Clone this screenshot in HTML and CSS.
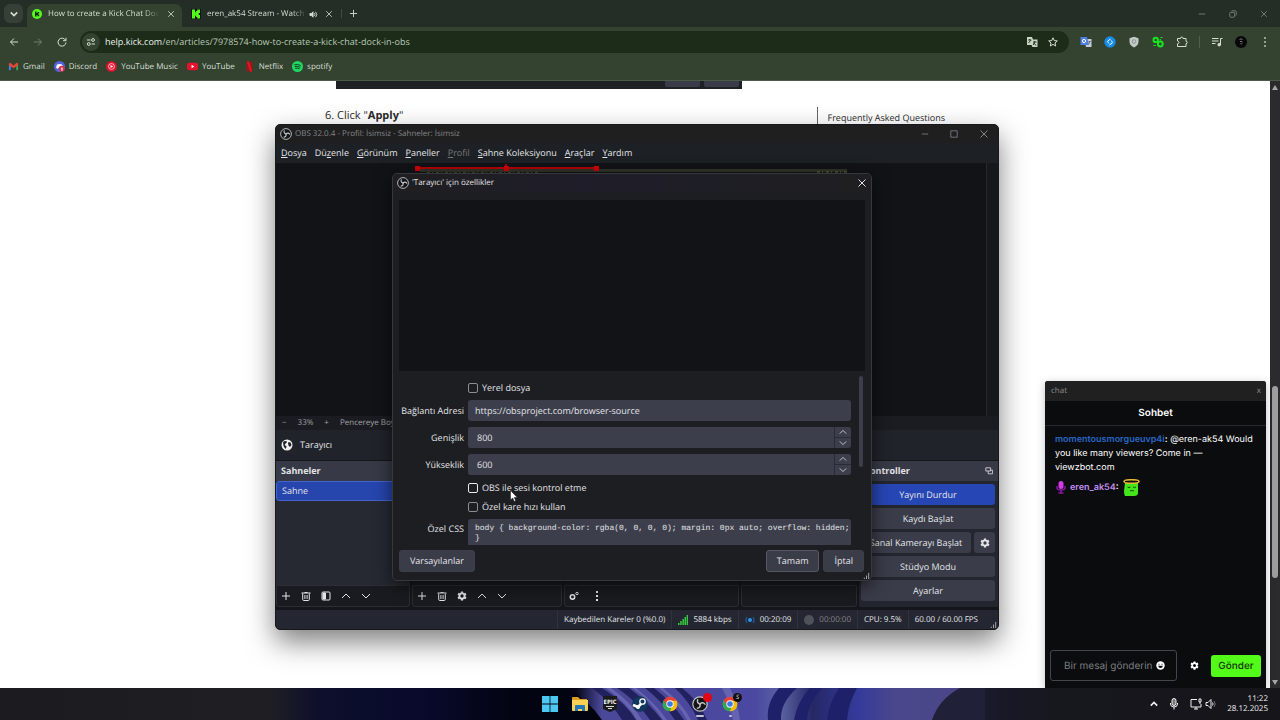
FILE: index.html
```html
<!DOCTYPE html>
<html lang="tr">

<head>
    <meta charset="UTF-8">
    <meta name="viewport" content="width=device-width, initial-scale=1.0">
    <title>How to create a Kick Chat Dock in OBS</title>
    <link rel="stylesheet" href="styles.css">
</head>

<body>
    <!-- shared icons -->
    <svg class="defs" aria-hidden="true">
        <symbol id="i-close" viewBox="0 0 10 10"><path d="M1.5 1.5l7 7M8.5 1.5l-7 7" /></symbol>
        <symbol id="i-plus" viewBox="0 0 10 10"><path d="M5 1v8M1 5h8" /></symbol>
        <symbol id="i-up" viewBox="0 0 10 10"><path d="M1 7l4-4 4 4" /></symbol>
        <symbol id="i-down" viewBox="0 0 10 10"><path d="M1 3l4 4 4-4" /></symbol>
        <symbol id="i-trash" viewBox="0 0 10 10"><path d="M0.5 2h9M3.5 1.5h3M1.7 2.3v6q0 1.2 1 1.2h4.600q1 0 1-1.200v-6M3.900 4v4M6.100 4v4" /></symbol>
        <symbol id="i-gear" viewBox="0 0 24 24"><path fill="currentColor" stroke="none" fill-rule="evenodd" d="M9.500 1h5l.7 3.200 1.900 1.100 3.100-1 2.500 4.400-2.400 2.200v2.200l2.400 2.200-2.500 4.400-3.100-1-1.900 1.100-.7 3.200h-5l-.7-3.200-1.900-1.100-3.100 1-2.500-4.400 2.400-2.200v-2.200L1.300 8.700l2.500-4.400 3.100 1 1.900-1.100zM12 8a4 4 0 100 8 4 4 0 000-8z" /></symbol>
        <symbol id="i-obs" viewBox="0 0 24 24">
            <circle cx="12" cy="12" r="10.800" fill="#141519" stroke="#c4c4c6" stroke-width="1.800" />
            <g fill="none" stroke="#c4c4c6" stroke-width="2.200" stroke-linecap="round">
                <path d="M12 12C8.500 11 7.500 8.500 8.500 5.500" />
                <path d="M12 12c2.600-2.500 5.300-2.200 7.400.2" />
                <path d="M12 12c.9 3.500-.7 5.700-3.800 6.300" />
            </g>
        </symbol>
        <symbol id="i-grip" viewBox="0 0 8 8"><path d="M1.500 8V6.500M4 8V4M6.500 8V1" /></symbol>
        <symbol id="i-chrome" viewBox="0 0 24 24">
            <g stroke="none">
                <path fill="#ea4335" d="M12 12L2.500 6.500a11 11 0 0119 0z" />
                <path fill="#fbbc04" d="M12 12l9.500-5.500A11 11 0 0112 23z" />
                <path fill="#34a853" d="M12 12v11A11 11 0 012.500 6.500z" />
                <path fill="#ea4335" d="M2.500 6.500L7 14.500l5-7.500h9.800L20 4z" />
                <path fill="#34a853" d="M2.500 6.500l5 8.500 6.500 2.500L12 23A11 11 0 012.500 6.500z" />
                <path fill="#fbbc04" d="M21.500 7H12l5 7.500L12 23A11 11 0 0021.500 7z" />
                <circle cx="12" cy="12" r="5.500" fill="#fff" />
                <circle cx="12" cy="12" r="4.200" fill="#3b7bea" />
            </g>
        </symbol>
    </svg>

    <header class="browser">
        <div class="tabstrip">
            <button class="tab-search" aria-label="Search tabs"><svg class="ico s8 bold"><use href="#i-down" /></svg></button>
            <div class="tab active">
                <svg class="fav" viewBox="0 0 10 10"><circle cx="5" cy="5" r="5" fill="#53fc18" /><path fill="#16231a" d="M3 2.500h1.500V4h1V3h1.700v1.500h-1v1h1V7.200H5.500V6h-1v1.500H3z" /></svg>
                <span class="tab-title">How to create a Kick Chat Dock</span>
                <button class="tab-close" aria-label="Close tab"><svg class="ico s8"><use href="#i-close" /></svg></button>
            </div>
            <div class="tab">
                <svg class="fav" viewBox="0 0 10 10"><path fill="#0c120c" d="M0 0h10v10H0z" /><path fill="#53fc18" d="M1 .5h3v2.700h1V2h1.200V.5H9V4H7.800v2H9v3.500H6.200V8H5V6.800H4v2.700H1z" /></svg>
                <span class="tab-title">eren_ak54 Stream - Watch L</span>
                <svg class="ico s9" viewBox="0 0 10 10"><path fill="currentColor" d="M1 4h1.500l2-2v6l-2-2H1z" /><path d="M6 3.500q1.300 1.500 0 3M7.300 2q2.600 3 0 6" /></svg>
                <button class="tab-close" aria-label="Close tab"><svg class="ico s8"><use href="#i-close" /></svg></button>
            </div>
            <button class="new-tab" aria-label="New tab"><svg class="ico s9"><use href="#i-plus" /></svg></button>
            <div class="win-controls">
                <button aria-label="Minimize"><svg class="ico s8" viewBox="0 0 10 10"><path d="M1 5h8" /></svg></button>
                <button aria-label="Restore"><svg class="ico s8" viewBox="0 0 10 10"><rect x="1" y="3" width="6" height="6" rx="1" /><path d="M3 1.500q0-.5 1-.5h3.500Q9 1 9 2.500V6q0 1-.7 1" /></svg></button>
                <button aria-label="Close"><svg class="ico s8"><use href="#i-close" /></svg></button>
            </div>
        </div>

        <div class="toolbar">
            <nav class="nav-buttons">
                <button aria-label="Back"><svg class="ico s10" viewBox="0 0 10 10"><path d="M9 5H1.500M5 1.500L1.500 5 5 8.500" /></svg></button>
                <button aria-label="Forward" disabled><svg class="ico s10" viewBox="0 0 10 10"><path d="M1 5h7.500M5 1.500L8.500 5 5 8.500" /></svg></button>
                <button aria-label="Reload"><svg class="ico s10" viewBox="0 0 10 10"><path d="M8.500 3.200A4 4 0 109 5.500M9 .8v2.900H6" /></svg></button>
            </nav>
            <div class="omnibox">
                <button class="site-info" aria-label="Site information"><svg class="ico s10" viewBox="0 0 10 10"><path d="M1 3h3.500M5.500 7H9" /><circle cx="7" cy="3" r="1.400" /><circle cx="2.800" cy="7" r="1.400" /></svg></button>
                <span class="url"><b>help.kick.com</b>/en/articles/7978574-how-to-create-a-kick-chat-dock-in-obs</span>
                <button aria-label="Translate"><svg class="ico s12" viewBox="0 0 12 12"><path fill="#c9d3c6" stroke="none" d="M1 1h5l1 2.500h4.500V11H6.500L5.500 9H1z" /><path stroke="#24361f" d="M2.300 4h3M3.800 3v1M2.500 7l2.500-3M7 6h3.500M8.700 5v1l-1.500 3M8 7l2 2.500" /></svg></button>
                <button aria-label="Bookmark"><svg class="ico s10" viewBox="0 0 10 10"><path d="M5 .8l1.300 2.800 3 .3L7 6l.7 3L5 7.400 2.300 9 3 6 .7 3.900l3-.3z" /></svg></button>
            </div>
            <div class="extensions">
                <button aria-label="Google Translate"><svg class="ico s12" viewBox="0 0 12 12"><path fill="#c6cdd6" stroke="none" d="M4 3h7.500v8H6z" /><path fill="#4c80dc" stroke="none" d="M.5 1H7l2 8H.5z" /><circle cx="4" cy="5" r="1.600" stroke="#fff" /><path stroke="#68727c" d="M8.500 5.500h2.300M9.600 5.500L9 8" /></svg></button>
                <button aria-label="Shazam"><svg class="ico s12" viewBox="0 0 12 12"><circle cx="6" cy="6" r="5.700" fill="#168be5" stroke="none" /><path stroke="#fff" d="M6.500 3L4 4.800q-1 1 .2 1.900l1 .8M5.500 9L8 7.200q1-1-.2-1.900l-1-.8" /></svg></button>
                <button aria-label="Shield"><svg class="ico s12" viewBox="0 0 12 12"><path fill="#c3c9c7" stroke="none" d="M6 .8l4.500 1.500v3.500q0 3.700-4.500 5.700-4.500-2-4.500-5.700V2.300z" /><circle cx="6" cy="5.500" r="1.800" stroke="#8c9691" /></svg></button>
                <button aria-label="Extension"><svg class="ico s12 green" viewBox="0 0 12 12"><circle cx="3.700" cy="3.900" r="2.200" /><circle cx="8.300" cy="8" r="2.400" /><path stroke-width="1.200" d="M8.500 1.500h2M1.500 9.500H4M7.800 3.200l1 1.200" /></svg></button>
                <button aria-label="Extensions"><svg class="ico s12" viewBox="0 0 12 12"><path d="M1.500 2.500h3q0-1.500 1.300-1.500T7 2.500h3v2.800q1.200 0 1.200 1.200T10 7.700v2.800H1.500V7.800q1.500-.2 1.500-1.400T1.500 5z" /></svg></button>
                <i class="divider"></i>
                <button aria-label="Media control"><svg class="ico s12" viewBox="0 0 12 12"><path d="M1 2.500h6.500M1 5h6.500M1 7.500h3.500M9.500 8.500v-6h2" /><circle cx="8.200" cy="8.700" r="1.300" fill="currentColor" /></svg></button>
                <button aria-label="Profile"><svg class="ico s12" viewBox="0 0 12 12"><circle cx="6" cy="6" r="6" fill="#070807" stroke="none" /><path stroke="#999" stroke-width=".8" d="M4.500 3.500q1.500-1.200 3 0M5 5.500h2.300M5.500 7.500q1 1 2-.5" /></svg></button>
                <button aria-label="Menu"><svg class="ico s12" viewBox="0 0 12 12"><path fill="currentColor" stroke="none" d="M5.200 1.200h1.600v1.600H5.200zM5.200 5.200h1.600v1.600H5.200zM5.200 9.200h1.600v1.600H5.200z" /></svg></button>
            </div>
        </div>

        <nav class="bookmarks">
            <a href="#"><svg viewBox="0 0 12 12"><path fill="#4285f4" d="M1 3h2v7H1z" /><path fill="#34a853" d="M9 3h2v7H9z" /><path fill="#ea4335" d="M1 2.500l1.500-.5L6 5l3.500-3 1.500.5v2L6 8 1 4.500z" /></svg>Gmail</a>
            <a href="#"><svg viewBox="0 0 12 12"><circle cx="6" cy="6" r="6" fill="#5661dc" /><path fill="#fff" d="M3 4q3-1.500 6 0l.7 3.500-2 1L7 7.700H5l-.7.800-2-1z" /><circle cx="8.500" cy="8.500" r="3.300" fill="#d9304c" /><path fill="#fff" d="M8 7h1.300v3.500H8z" /></svg>Discord</a>
            <a href="#"><svg viewBox="0 0 12 12"><circle cx="6" cy="6" r="5.800" fill="#e8112d" /><circle cx="6" cy="6" r="3.200" fill="none" stroke="#fff" stroke-width=".7" /><path fill="#fff" d="M5 4.300L8 6 5 7.700z" /></svg>YouTube Music</a>
            <a href="#"><svg viewBox="0 0 12 12"><rect y="2" width="12" height="8" rx="2" fill="#e8112d" /><path fill="#fff" d="M5 4.200L8 6 5 7.800z" /></svg>YouTube</a>
            <a href="#"><svg viewBox="0 0 12 12"><path fill="#a90f18" d="M3 .5h2.500v11H3zM6.500 .5H9v11H6.500z" /><path fill="#df1722" d="M3 .5h2.500l3.500 11H6.500z" /></svg>Netflix</a>
            <a href="#"><svg viewBox="0 0 12 12"><circle cx="6" cy="6" r="6" fill="#1ed760" /><path fill="none" stroke="#15351f" d="M2.500 4.200q3.500-1 7 .7M3 6.200q3-.8 6 .6M3.500 8q2.500-.6 4.700.5" /></svg>spotify</a>
        </nav>
    </header>

    <main class="page">
        <article class="article">
            <div class="article-main">
                <div class="shot"><span></span><span></span></div>
                <p>6. Click "<b>Apply</b>"</p>
            </div>
            <aside><a href="#">Frequently Asked Questions</a></aside>
        </article>
        <div class="scrollbar"><i class="arrow-up"></i><i class="thumb"></i><i class="arrow-down"></i></div>
    </main>

    <!-- OBS main window -->
    <section class="window obs">
        <div class="titlebar dim">
            <svg class="logo"><use href="#i-obs" /></svg>
            <span>OBS 32.0.4 - Profil: İsimsiz - Sahneler: İsimsiz</span>
            <div class="title-buttons">
                <button aria-label="Simge durumuna küçült"><svg class="ico s8" viewBox="0 0 10 10"><path d="M1 5h8" /></svg></button>
                <button aria-label="Ekranı kapla"><svg class="ico s8" viewBox="0 0 10 10"><path d="M1 1h8v8H1z" /></svg></button>
                <button aria-label="Kapat"><svg class="ico s10"><use href="#i-close" /></svg></button>
            </div>
        </div>
        <nav class="menubar">
            <button><u>D</u>osya</button>
            <button>Dü<u>z</u>enle</button>
            <button><u>G</u>örünüm</button>
            <button><u>P</u>aneller</button>
            <button disabled><u>P</u>rofil</button>
            <button><u>S</u>ahne Koleksiyonu</button>
            <button><u>A</u>raçlar</button>
            <button><u>Y</u>ardım</button>
        </nav>
        <div class="preview">
            <svg class="selection" viewBox="0 0 440 12">
                <path fill="#303527" d="M5 6h427v3H5z" />
                <path stroke="#66703c" stroke-dasharray="3 2 1 3" d="M12 10h112M402 9h30" />
                <path stroke="#b30009" stroke-width="2" d="M2 5h180M91 1v4" />
                <path fill="#d0000c" d="M0 3h5v5H0zM89 3h5v5H89zM179 3h5v5H179z" />
            </svg>
            <i class="preview-edge"></i>
        </div>
        <div class="zoombar">
            <button aria-label="Uzaklaştır">−</button><span>33%</span><button aria-label="Yakınlaştır">+</button>
            <span class="fit">Pencereye Boyutlandır</span>
        </div>
        <div class="source-bar">
            <svg viewBox="0 0 12 12"><circle cx="6" cy="6" r="5.500" fill="#f2f2f2" /><path fill="#20232a" d="M2 3q2-1.500 4-.5L5.500 4 4 5v1.500l1.500.5v1L4.500 10Q3 8 2.500 7zM7.500 3l2 .5 1 2.500-1.500 2L7.500 6.500 7 4.500z" /></svg>
            <span>Tarayıcı</span>
        </div>
        <div class="docks">
            <section class="dock scenes">
                <h2>Sahneler</h2>
                <div class="dock-body"><button class="scene">Sahne</button></div>
                <div class="dock-tools">
                    <button aria-label="Ekle"><svg class="ico s10"><use href="#i-plus" /></svg></button>
                    <button aria-label="Sil"><svg class="ico s10"><use href="#i-trash" /></svg></button>
                    <button aria-label="Filtreler"><svg class="ico s10" viewBox="0 0 10 10"><rect x="1" y="1" width="8" height="8" rx="1" /><path fill="currentColor" d="M2 2h2.500v6H2z" /></svg></button>
                    <button aria-label="Yukarı"><svg class="ico s10"><use href="#i-up" /></svg></button>
                    <button aria-label="Aşağı"><svg class="ico s10"><use href="#i-down" /></svg></button>
                </div>
            </section>
            <section class="dock sources" aria-label="Kaynaklar">
                <div class="dock-body"></div>
                <div class="dock-tools">
                    <button aria-label="Ekle"><svg class="ico s10"><use href="#i-plus" /></svg></button>
                    <button aria-label="Sil"><svg class="ico s10"><use href="#i-trash" /></svg></button>
                    <button aria-label="Özellikler"><svg class="ico s10"><use href="#i-gear" /></svg></button>
                    <button aria-label="Yukarı"><svg class="ico s10"><use href="#i-up" /></svg></button>
                    <button aria-label="Aşağı"><svg class="ico s10"><use href="#i-down" /></svg></button>
                </div>
            </section>
            <section class="dock mixer" aria-label="Ses Karıştırıcısı">
                <div class="dock-body"></div>
                <div class="dock-tools">
                    <button aria-label="Gelişmiş ses"><svg class="ico s10" viewBox="0 0 10 10"><circle cx="3.500" cy="6" r="2.200" stroke-width="1.500" /><circle cx="8" cy="2.500" r="1.200" /></svg></button>
                    <button aria-label="Menü"><svg class="ico s10" viewBox="0 0 10 10"><path fill="currentColor" stroke="none" d="M4 0h2v2H4zM4 4h2v2H4zM4 8h2v2H4z" /></svg></button>
                </div>
            </section>
            <section class="dock transitions" aria-label="Sahne Geçişleri">
                <div class="dock-body"></div>
                <div class="dock-tools"></div>
            </section>
            <section class="dock controls">
                <h2>Kontroller <svg class="ico s8" viewBox="0 0 10 10"><path d="M1 1h6v4H1zM4 5v3.500h5.500V4H7" /></svg></h2>
                <div class="control-list">
                    <button class="primary">Yayını Durdur</button>
                    <button>Kaydı Başlat</button>
                    <div class="control-pair">
                        <button>Sanal Kamerayı Başlat</button>
                        <button aria-label="Sanal kamera ayarları"><svg class="ico s10"><use href="#i-gear" /></svg></button>
                    </div>
                    <button>Stüdyo Modu</button>
                    <button>Ayarlar</button>
                </div>
            </section>
        </div>
        <footer class="statusbar">
            <span>Kaybedilen Kareler 0 (%0.0)</span>
            <span><svg viewBox="0 0 10 10"><path fill="#37c840" d="M0 8h1.500v2H0zM2.200 6h1.500v4H2.200zM4.400 4h1.500v6H4.400zM6.500 2h1.500v8H6.500zM8.600 0H10v10H8.600z" /></svg>5884 kbps</span>
            <span><svg viewBox="0 0 10 10"><circle cx="5" cy="5" r="2" fill="#2c95ee" /><path fill="none" stroke="#215b96" stroke-width="1.300" d="M2 2q-2 3 0 6M8 2q2 3 0 6" /></svg>00:20:09</span>
            <span class="off"><svg viewBox="0 0 10 10"><circle cx="5" cy="5" r="5" fill="#50525a" /></svg>00:00:00</span>
            <span>CPU: 9.5%</span>
            <span>60.00 / 60.00 FPS</span>
            <svg class="grip"><use href="#i-grip" /></svg>
        </footer>
    </section>

    <!-- source properties dialog -->
    <form class="window dialog">
        <div class="titlebar">
            <svg class="logo"><use href="#i-obs" /></svg>
            <span>'Tarayıcı' için özellikler</span>
            <div class="title-buttons"><button type="button" aria-label="Kapat"><svg class="ico s10"><use href="#i-close" /></svg></button></div>
        </div>
        <div class="dialog-preview"></div>
        <div class="dialog-scroll">
            <div class="fields">
                <label class="check"><input type="checkbox">Yerel dosya</label>
                <label for="url">Bağlantı Adresi</label>
                <input class="field" id="url" type="text" value="https://obsproject.com/browser-source">
                <label for="width">Genişlik</label>
                <div class="spin">
                    <input class="field" id="width" type="text" value="800">
                    <button type="button" aria-label="Artır"><svg class="ico s8"><use href="#i-up" /></svg></button>
                    <button type="button" aria-label="Azalt"><svg class="ico s8"><use href="#i-down" /></svg></button>
                </div>
                <label for="height">Yükseklik</label>
                <div class="spin">
                    <input class="field" id="height" type="text" value="600">
                    <button type="button" aria-label="Artır"><svg class="ico s8"><use href="#i-up" /></svg></button>
                    <button type="button" aria-label="Azalt"><svg class="ico s8"><use href="#i-down" /></svg></button>
                </div>
                <label class="check hover"><input type="checkbox">OBS ile sesi kontrol etme</label>
                <label class="check"><input type="checkbox">Özel kare hızı kullan</label>
                <label for="css">Özel CSS</label>
                <textarea class="field" id="css" spellcheck="false">body { background-color: rgba(0, 0, 0, 0); margin: 0px auto; overflow: hidden; }</textarea>
            </div>
            <i class="dialog-thumb"></i>
        </div>
        <div class="dialog-buttons">
            <button type="button">Varsayılanlar</button>
            <button type="button" class="default">Tamam</button>
            <button type="button">İptal</button>
        </div>
        <svg class="grip"><use href="#i-grip" /></svg>
    </form>

    <!-- chat dock -->
    <section class="chat">
        <div class="chat-title"><span>chat</span><button aria-label="Kapat">x</button></div>
        <h2>Sohbet</h2>
        <div class="messages">
            <p><b class="user-blue">momentousmorgueuvp4i</b><b>:</b> @eren-ak54 Would you like many viewers? Come in — viewzbot.com</p>
            <p class="host">
                <svg class="mic" viewBox="0 0 10 13"><rect x="2.500" width="5" height="8" rx="2.500" fill="#d63ae8" /><path fill="none" stroke="#8a16a8" stroke-width="1.500" d="M1 5v2q0 2 4 2t4-2V5M5 9v3M2.500 12h5" /></svg>
                <b><span class="user-purple">eren_ak54</span>:</b>
                <svg class="emote" viewBox="0 0 17 17"><path fill="#45e51b" d="M2 4h13v10q0 3-4 3H2q-1-2-1-5z" /><ellipse cx="8.500" cy="2.500" rx="7.500" ry="1.800" fill="none" stroke="#e8b734" stroke-width="1.500" /><path fill="none" stroke="#144b0b" d="M4.500 8q1.500 1.200 3 0M10 8q1.500 1.200 3 0M7 12q2-1 4 0" /></svg>
            </p>
        </div>
        <div class="composer">
            <div class="message-box">
                <input type="text" placeholder="Bir mesaj gönderin" aria-label="Bir mesaj gönderin">
                <button aria-label="İfadeler"><svg viewBox="0 0 10 10"><circle cx="5" cy="5" r="4.700" fill="#fff" /><path fill="#0b0c0d" d="M2.800 3h1v1.300h-1zM6.200 3h1v1.300h-1zM2.300 5.300h5.400q-.5 2.500-2.700 2.500T2.300 5.300z" /></svg></button>
            </div>
            <button aria-label="Ayarlar"><svg class="ico s9"><use href="#i-gear" /></svg></button>
            <button class="send">Gönder</button>
        </div>
    </section>

    <footer class="taskbar">
        <svg class="wallpaper" viewBox="0 0 1280 32" preserveAspectRatio="none">
            <defs>
                <linearGradient id="base">
                    <stop offset="0" stop-color="#1c1c20" />
                    <stop offset=".21" stop-color="#1f1f23" />
                    <stop offset=".25" stop-color="#0d0f2c" />
                    <stop offset=".33" stop-color="#090a2c" />
                    <stop offset=".4" stop-color="#030413" />
                    <stop offset=".45" stop-color="#050516" />
                    <stop offset=".47" stop-color="#4a4898" />
                    <stop offset=".59" stop-color="#4b48a2" />
                    <stop offset=".61" stop-color="#5c62a0" />
                    <stop offset=".635" stop-color="#252765" />
                    <stop offset=".67" stop-color="#353a9a" />
                    <stop offset=".7" stop-color="#4a478c" />
                    <stop offset=".75" stop-color="#4a4688" />
                    <stop offset=".765" stop-color="#191a2c" />
                    <stop offset=".82" stop-color="#17171e" />
                    <stop offset="1" stop-color="#15151a" />
                </linearGradient>
            </defs>
            <path fill="url(#base)" d="M0 0h1280v32H0z" />
            <path fill="#030412" d="M520 0h48q22 14 34 32H520z" />
            <path fill="#20215d" d="M592 0h10q24 15 34 32h-14q-10-17-30-32zM617 0h12q20 15 33 32h-12q-12-18-33-32zM645 0h9q18 14 30 32h-9q-12-18-30-32zM675 0h7q18 14 25 32h-9q-8-18-23-32z" />
            <path fill="#8080bf" opacity=".5" d="M606 0h5q22 16 31 32h-5q-10-17-31-32zM632 0h4q20 16 31 32h-4q-11-18-31-32zM659 0h4q20 16 28 32h-4q-8-16-28-32zM722 0h8q8 16 10 32h-7q-3-18-11-32z" />
            <path fill="#1e206a" d="M779 0h18q-17 15-16 32h-13q-2-17 11-32zM810 0h12q-14 15-15 32h-13q3-18 16-32zM839 0h18q-9 16-10 32h-20q2-18 12-32z" />
            <path fill="#202038" d="M960 0h25v32h-53q7-21 28-32z" />
        </svg>
        <nav class="apps">
            <button aria-label="Başlat"><svg viewBox="0 0 16 16"><path fill="#4cc8f2" d="M0 0h7.600v7.600H0zM8.400 0H16v7.600H8.400zM0 8.400h7.600V16H0zM8.400 8.400H16V16H8.400z" /></svg></button>
            <button aria-label="Dosya Gezgini"><svg viewBox="0 0 16 16"><path fill="#d99b24" d="M0 2q0-1 1-1h5l2 2h7v4H0z" /><path fill="#fad155" d="M0 4h16v10q0 1-1 1H1q-1 0-1-1z" /><path fill="#2277ba" d="M3 10q0-1 1-1h8q1 0 1 1v5h-3v-2H6v2H3z" /></svg></button>
            <button aria-label="Epic Games"><svg viewBox="0 0 16 16"><path fill="#1b1b1d" d="M1 0h14v13l-7 3-7-3z" /><text x="8" y="8">EPIC</text><path stroke="#ddd" d="M4 10.500h8M6 12.500h4" /></svg></button>
            <button aria-label="Steam"><svg viewBox="0 0 16 16"><circle cx="8" cy="8" r="7.800" fill="#12375d" /><path stroke="#fff" stroke-width="2.500" d="M1 9l5 2 4-4" /><circle cx="10.500" cy="5.500" r="2.700" fill="#12375d" stroke="#fff" stroke-width="1.300" /><circle cx="6" cy="11" r="2" fill="#fff" /></svg></button>
            <button aria-label="Chrome"><svg><use href="#i-chrome" /></svg></button>
            <button class="running" aria-label="OBS Studio"><svg><use href="#i-obs" /></svg><i class="badge red"></i></button>
            <button class="open" aria-label="Chrome, kick"><svg><use href="#i-chrome" /></svg><i class="badge">S</i></button>
        </nav>
        <div class="tray">
            <button aria-label="Gizli simgeler"><svg class="ico s8 bold"><use href="#i-up" /></svg></button>
            <svg class="ico s12" viewBox="0 0 12 12"><rect x="4" y="0.500" width="4" height="7" rx="2" fill="#777" /><path d="M2.500 5v1q0 3 3.500 3t3.500-3V5M6 9v2.500" /></svg>
            <div class="tray-pair">
                <svg class="ico s12" viewBox="0 0 12 12"><path d="M7 1.500H1v7.500h10V6M4 11h4M6 9v2M9 1h2v3H9zM10 4v2" /></svg>
                <svg class="ico s12" viewBox="0 0 12 12"><path d="M1 4.500h2l3-3v9l-3-3H1zM7.500 4.500q1.300 1.500 0 3" /><path opacity=".4" d="M9 3q2.500 3 0 6" /></svg>
            </div>
            <time>11:22<br>28.12.2025</time>
        </div>
    </footer>

    <svg class="cursor" viewBox="0 0 8 12"><path fill="#fff" stroke="#111" stroke-width=".5" d="M.5.5v9.500l2.200-2 1.500 3.500 1.500-.7L4.300 7.500h3z" /></svg>
</body>

</html>
```
FILE: styles.css
```css
* {
    box-sizing: border-box;
}

body {
    margin: 0;
    height: 100vh;
    overflow: hidden;
    display: flex;
    flex-direction: column;
    position: relative;
    background-color: #fff;
    font-family: "Open Sans", "Noto Sans", sans-serif;
    font-size: 9px;
    line-height: 12px;
    text-rendering: geometricPrecision;
}

button,
input,
textarea {
    font: inherit;
    color: inherit;
    text-rendering: inherit;
    border: none;
    margin: 0;
    padding: 0;
    background: none;
    outline: none;
}

button {
    display: flex;
    align-items: center;
    justify-content: center;
    white-space: nowrap;
}

a {
    color: inherit;
    text-decoration: none;
}

h2,
p {
    margin: 0;
    font-size: inherit;
}

.defs {
    position: absolute;
    width: 0;
    height: 0;
}

/* icons */
.ico {
    fill: none;
    stroke: currentColor;
    flex: none;
    display: block;
}

.s8 {
    width: 8px;
    height: 8px;
}

.s9 {
    width: 9px;
    height: 9px;
}

.s10 {
    width: 10px;
    height: 10px;
}

.s12 {
    width: 12px;
    height: 12px;
}

.bold {
    stroke-width: 2px;
}

.green {
    color: #18e51c;
    stroke-width: 2px;
}

/* browser */
.browser {
    color: #d5dfd2;
    background-color: #334330;
    border-bottom: 1px solid #4c5a4a;
}

.tabstrip {
    display: flex;
    align-items: center;
    height: 27px;
    padding-left: 4px;
    background-color: #252e26;
}

.tab-search {
    width: 19px;
    height: 19px;
    border-radius: 6px;
    background-color: #364037;
}

.tab {
    display: flex;
    align-items: center;
    width: 158px;
    height: 23px;
    align-self: flex-end;
    padding: 0 7px 3px 9px;
    font-size: 8px;
}

.tab.active {
    margin-left: 4px;
    padding-left: 5px;
    width: 155px;
    border-radius: 7px 7px 0 0;
    background-color: #334330;
}

.fav {
    width: 10px;
    height: 10px;
    flex: none;
    margin-right: 6px;
}

.tab-title {
    flex: 1;
    overflow: hidden;
    white-space: nowrap;
    -webkit-mask-image: linear-gradient(90deg, #000 85%, transparent);
    mask-image: linear-gradient(90deg, #000 85%, transparent);
}

.tab > .ico {
    margin-left: 2px;
}

.tab-close {
    margin-left: 7px;
}

.new-tab {
    margin-left: 1px;
    padding-left: 7px;
    border-left: 1px solid #3f4a40;
}

.win-controls {
    margin-left: auto;
    display: flex;
    gap: 23px;
    padding-right: 12px;
    color: #838a84;
}

.toolbar {
    display: flex;
    align-items: center;
    height: 30px;
}

.nav-buttons {
    display: flex;
    gap: 14px;
    padding: 0 13px 0 9px;
}

button:disabled {
    color: #73806f;
}

.omnibox {
    flex: 1;
    display: flex;
    align-items: center;
    gap: 10px;
    height: 22px;
    padding: 0 11px 0 2px;
    border-radius: 11px;
    background-color: #1c2c19;
}

.site-info {
    width: 18px;
    height: 18px;
    border-radius: 50%;
    background-color: #334330;
}

.url {
    flex: 1;
    margin-left: -5px;
    color: #bbc7b7;
}

.url b {
    font-weight: 500;
    color: #eef3ec;
}

.extensions {
    display: flex;
    align-items: center;
    gap: 12px;
    padding: 0 9px 0 11px;
}

.divider {
    width: 1px;
    height: 12px;
    margin: 0 -1px;
    background-color: #4e5f4b;
}

.bookmarks {
    display: flex;
    align-items: center;
    gap: 9px;
    height: 23px;
    padding: 0 8px 4px;
    font-size: 8px;
}

.bookmarks a {
    display: flex;
    align-items: center;
    gap: 4px;
}

.bookmarks svg {
    width: 11px;
    height: 11px;
}

/* help page */
.page {
    flex: 1;
    display: flex;
    min-height: 0;
}

.article {
    display: flex;
    justify-content: space-between;
    align-items: flex-start;
    width: 620px;
    margin: 0 auto;
    color: #2b2b2b;
}

.shot {
    display: flex;
    justify-content: flex-end;
    gap: 4px;
    width: 406px;
    height: 8px;
    margin-left: 11px;
    padding: 0 3px 2px 0;
    background-color: #1e2123;
}

.shot span {
    width: 35px;
    border-radius: 0 0 2px 2px;
    background-color: #393b48;
}

.article-main p {
    margin-top: 19px;
    font-size: 11px;
    line-height: 16px;
}

.article aside {
    margin-top: 26px;
    padding: 5px 0 4px 10px;
    border-left: 1px solid #666;
    white-space: nowrap;
}

.scrollbar {
    display: flex;
    flex-direction: column;
    align-items: center;
    width: 10px;
    padding: 4px 0 3px;
    background-color: #2b2b2d;
}

.scrollbar .thumb {
    width: 6px;
    height: 192px;
    margin: auto 0 102px;
    border-radius: 3px;
    background-color: #9e9e9e;
}

.arrow-up,
.arrow-down {
    border: 3px solid transparent;
    border-top-width: 0;
    border-bottom: 5px solid #a5a5a5;
}

.arrow-down {
    transform: rotate(180deg);
}

/* desktop windows */
.window {
    position: absolute;
    display: flex;
    flex-direction: column;
    color: #e3e4e8;
    overflow: hidden;
}

.obs {
    left: 275px;
    top: 124px;
    width: 724px;
    height: 506px;
    border: 1px solid #17181b;
    border-radius: 5px;
    background-color: #15161a;
    box-shadow: 0 12px 28px rgba(0, 0, 0, 0.5);
}

.titlebar {
    display: flex;
    align-items: center;
    flex: none;
    gap: 3px;
    height: 18px;
    padding: 0 4px;
    font-size: 8px;
    background-color: #1f1f20;
}

.titlebar.dim {
    color: #85868a;
}

.logo {
    width: 12px;
    height: 12px;
}

.title-buttons {
    display: flex;
    gap: 21px;
    margin-left: auto;
    padding-right: 5px;
}

.menubar {
    display: flex;
    flex: none;
    gap: 8px;
    height: 20px;
    padding: 0 5px;
    background-color: #1d2024;
}

.menubar button {
    display: block;
    line-height: 20px;
}

.menubar button:disabled {
    color: #75767a;
}

.preview {
    flex: 1;
    display: flex;
    justify-content: space-between;
    background-color: #121317;
}

.selection {
    width: 440px;
    height: 12px;
    margin-left: 139px;
    fill: none;
    overflow: visible;
}

.preview-edge {
    width: 12px;
    border-left: 1px solid #26282d;
    background-color: #17181c;
}

.zoombar {
    display: flex;
    align-items: center;
    flex: none;
    gap: 11px;
    height: 14px;
    padding-left: 6px;
    font-size: 8px;
    color: #a3a4a9;
    background-color: #1b1c21;
}

.source-bar {
    display: flex;
    align-items: center;
    flex: none;
    gap: 7px;
    height: 30px;
    margin-bottom: 1px;
    padding-left: 5px;
    background-color: #20232a;
}

.source-bar svg {
    width: 12px;
    height: 12px;
}

.docks {
    display: grid;
    grid-template-columns: 134px 150px 175px 116px 1fr;
    gap: 2px;
    height: 149px;
    flex: none;
    padding-bottom: 3px;
}

.dock {
    display: flex;
    flex-direction: column;
    min-width: 0;
    background-color: #1a1b20;
}

.dock h2 {
    display: flex;
    align-items: center;
    justify-content: space-between;
    height: 20px;
    padding: 0 5px;
    font-weight: 700;
    background-color: #373a46;
}

.dock-body {
    flex: 1;
}

.scenes .dock-body {
    background-color: #262932;
}

.scene {
    width: 100%;
    height: 20px;
    justify-content: flex-start;
    padding-left: 5px;
    border: 1px solid #4264cf;
    border-radius: 3px;
    background-color: #2645ad;
}

.dock-tools {
    display: flex;
    align-items: center;
    gap: 10px;
    height: 22px;
    padding: 0 4px;
    border: 1px solid #2b2d34;
    border-radius: 0 0 3px 3px;
}

.mixer .dock-tools {
    gap: 13px;
}

.control-list {
    display: grid;
    gap: 3px;
    padding: 3px 3px 0 2px;
}

.controls {
    background-color: #23262e;
}

.control-list button {
    height: 21px;
    border-radius: 3px;
    background-color: #3a3c49;
}

.control-list .primary {
    background-color: #2746b5;
}

.control-pair {
    display: grid;
    grid-template-columns: 1fr 21px;
    gap: 3px;
}

.statusbar {
    position: relative;
    display: flex;
    justify-content: flex-end;
    flex: none;
    height: 19px;
    padding-right: 14px;
    font-size: 8px;
    background-color: #242731;
}

.statusbar span {
    display: flex;
    align-items: center;
    gap: 5px;
    padding: 1px 6px 0;
    border-left: 1px solid #30333d;
}

.statusbar span svg {
    width: 10px;
    height: 10px;
}

.statusbar .off {
    color: #85868c;
}

.grip {
    position: absolute;
    right: 1px;
    bottom: 1px;
    width: 7px;
    height: 7px;
    stroke: #b5b6ba;
}

/* dialog */
.dialog {
    left: 392px;
    top: 173px;
    width: 480px;
    height: 408px;
    border: 1px solid #37383c;
    border-radius: 5px;
    background-color: #1d1e22;
    box-shadow: 0 5px 18px rgba(0, 0, 0, 0.6);
}

.dialog .titlebar {
    background: linear-gradient(90deg, #1f1f21, #1e1d29 40%, #1f1f21);
}

.dialog .title-buttons {
    padding-right: 0;
}

.dialog-preview {
    flex: 1;
    margin: 8px 6px 0;
    background-color: #121317;
}

.dialog-scroll {
    display: flex;
    flex: none;
    height: 174px;
    margin: 0 8px 0 6px;
    padding-top: 5px;
    overflow: hidden;
}

.fields {
    flex: 1;
    display: grid;
    grid-template-columns: 65px 1fr;
    grid-auto-rows: min-content;
    align-items: center;
    gap: 6px 4px;
    padding-top: 5px;
}

.fields > label {
    text-align: right;
    white-space: nowrap;
}

.fields .check {
    grid-column: 2;
    display: flex;
    align-items: center;
    gap: 4px;
    height: 13px;
}

.check input {
    appearance: none;
    width: 10px;
    height: 10px;
    border: 1px solid #8b8d96;
    border-radius: 2px;
}

.check.hover input {
    border-color: #e9e9ee;
}

.field {
    width: 100%;
    height: 21px;
    padding: 0 7px;
    border-radius: 3px;
    background-color: #3c3f4b;
}

.spin {
    display: grid;
    grid-template: 10px 10px / 1fr 16px;
    gap: 1px;
    border-radius: 3px;
    background-color: #2a2c35;
    overflow: hidden;
}

.spin .field {
    grid-row: span 2;
    padding-left: 9px;
    border-radius: 0;
}

.spin button {
    background-color: #3c3f4b;
}

textarea.field {
    display: block;
    height: 50px;
    padding: 5px 0 5px 7px;
    font-family: "Liberation Mono", monospace;
    font-size: 8px;
    line-height: 10px;
    resize: none;
    overflow: hidden;
}

.fields label[for="css"] {
    align-self: start;
    margin-top: 4px;
}

.dialog-thumb {
    width: 4px;
    height: 91px;
    margin-left: 8px;
    border-radius: 2px;
    background-color: #3c3f4b;
}

.dialog-buttons {
    display: flex;
    flex: none;
    gap: 4px;
    padding: 5px 7px 8px 6px;
}

.dialog-buttons button {
    height: 22px;
    padding: 0 10px;
    border: 1px solid #3c3f4b;
    border-radius: 3px;
    background-color: #3a3c48;
}

.dialog-buttons .default {
    margin-left: auto;
    border-color: #555864;
}

/* chat dock */
.chat {
    position: absolute;
    right: 14px;
    bottom: 32px;
    width: 221px;
    height: 307px;
    display: flex;
    flex-direction: column;
    border-radius: 3px 3px 0 0;
    overflow: hidden;
    color: #fff;
    background-color: #0b0c0d;
    font-family: Inter, sans-serif;
    box-shadow: 0 2px 8px rgba(0, 0, 0, 0.25);
}

.chat-title {
    display: flex;
    justify-content: space-between;
    padding: 4px 5px 4px 6px;
    font-family: "Open Sans", sans-serif;
    font-size: 8px;
    color: #8b8b8b;
    background-color: #202021;
}

.chat h2 {
    height: 25px;
    line-height: 24px;
    text-align: center;
    font-size: 10px;
    font-weight: 600;
    border-bottom: 1px solid #26282b;
}

.messages {
    flex: 1;
    padding: 7px 10px;
    line-height: 14px;
}

.messages b {
    font-weight: 600;
}

.user-blue {
    color: #2767c8;
}

.user-purple {
    color: #c38cf0;
}

.host {
    display: flex;
    align-items: center;
    gap: 4px;
    margin-top: 4px;
}

.mic {
    width: 10px;
    height: 13px;
    margin-left: 1px;
}

.emote {
    width: 17px;
    height: 17px;
}

.composer {
    display: flex;
    align-items: center;
    justify-content: space-between;
    padding: 0 5px 7px;
}

.message-box {
    display: flex;
    align-items: center;
    width: 127px;
    height: 31px;
    padding: 0 11px 0 13px;
    border: 1px solid #43464a;
    border-radius: 3px;
}

.message-box input {
    flex: 1;
    min-width: 0;
    font-size: 10px;
}

.message-box input::placeholder {
    color: #7a7c80;
}

.message-box svg {
    width: 9px;
    height: 9px;
}

.send {
    width: 50px;
    height: 22px;
    border-radius: 3px;
    font-size: 10px;
    font-weight: 500;
    color: #15330c;
    background-color: #53fc18;
}

/* taskbar */
.taskbar {
    position: relative;
    display: grid;
    grid-template-columns: 1fr auto 1fr;
    align-items: center;
    height: 32px;
    color: #f0f0f0;
}

.wallpaper {
    position: absolute;
    width: 100%;
    height: 100%;
}

.apps {
    position: relative;
    grid-column: 2;
    display: flex;
    gap: 14px;
}

.apps button {
    position: relative;
    width: 16px;
    height: 32px;
}

.apps svg {
    width: 16px;
    height: 16px;
    fill: none;
}

.apps text {
    fill: #fff;
    font-size: 6px;
    font-weight: 700;
    text-anchor: middle;
}

.running::after,
.open::after {
    content: "";
    position: absolute;
    bottom: 3px;
    width: 8px;
    height: 2px;
    border-radius: 1px;
    background-color: #c2c2d5;
}

.open::after {
    width: 3px;
}

.badge {
    position: absolute;
    right: -4px;
    top: 5px;
    width: 9px;
    height: 9px;
    border-radius: 50%;
    font-size: 6px;
    line-height: 9px;
    background-color: #111;
}

.badge.red {
    background-color: #e30613;
}

.tray {
    position: relative;
    display: flex;
    align-items: center;
    justify-content: flex-end;
    gap: 10px;
    padding-right: 12px;
    font-size: 8px;
    line-height: 10px;
    text-align: right;
}

.tray-pair {
    display: flex;
    gap: 3px;
}

.cursor {
    position: absolute;
    left: 510px;
    top: 490px;
    width: 8px;
    height: 12px;
}
```
